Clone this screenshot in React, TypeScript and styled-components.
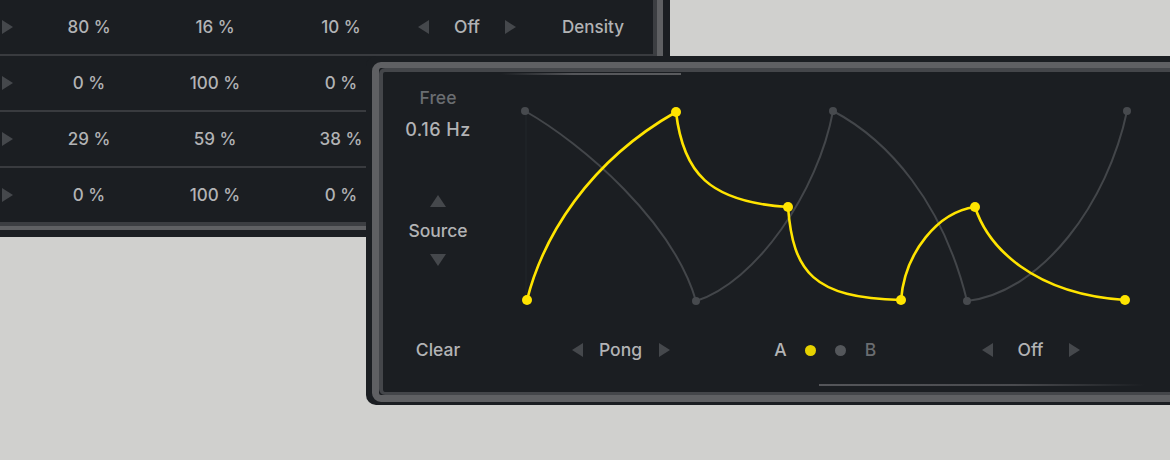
import styled, { createGlobalStyle } from "styled-components";

const GlobalStyle = createGlobalStyle`
  html, body { margin: 0; padding: 0; background: #d0d0ce; }
  body { font-family: Inter, "Noto Sans", sans-serif; }
`;

const Page = styled.div`
  width: 1170px;
  height: 460px;
  overflow: hidden;
  display: grid;
  grid-template-columns: 366px 304px 1fr;
  grid-template-rows: 56px 181px 1fr;
  background: #d0d0ce;
`;

// ---- top table panel (its left side is off screen) ----

const TopPanel = styled.div`
  grid-column: 1 / 3;
  grid-row: 1 / 3;
  background: #1b1e22;
  padding: 0 7px 7px 0;
  border-bottom-right-radius: 10px;
  box-sizing: border-box;
`;

const TopRing = styled.div`
  height: 100%;
  box-sizing: border-box;
  border-right: 6px solid #5f6063;
  border-bottom: 4px solid #5f6063;
  border-bottom-right-radius: 8px;
`;

const TopInner = styled.div`
  height: 100%;
  box-sizing: border-box;
  border-right: 4px solid #3c3e42;
  border-bottom: 4px solid #3c3e42;
  border-bottom-right-radius: 5px;
  overflow: hidden;
`;

const Row = styled.div`
  display: grid;
  grid-template-columns: 26px repeat(5, 126px);
  align-items: center;
  height: 54px;
  border-bottom: 2px solid #393b3f;
  &:last-child { border-bottom: none; }
`;

const Cell = styled.div`
  display: flex;
  justify-content: center;
  align-items: center;
  font-size: 17px;
  font-weight: 500;
  line-height: 20px;
  color: #b2b3b5;
  white-space: nowrap;
`;

const ExpandCell = styled.div`
  display: flex;
  align-items: center;
  padding-left: 2px;
`;

const Tri = styled.span<{ $dir: "up" | "down" | "left" | "right" }>`
  display: block;
  width: 0;
  height: 0;
  ${p =>
    p.$dir === "up"
      ? "border-left: 8px solid transparent; border-right: 8px solid transparent; border-bottom: 12px solid #45484c;"
      : p.$dir === "down"
      ? "border-left: 8px solid transparent; border-right: 8px solid transparent; border-top: 12px solid #45484c;"
      : p.$dir === "left"
      ? "border-top: 7px solid transparent; border-bottom: 7px solid transparent; border-right: 11px solid #45484c;"
      : "border-top: 7px solid transparent; border-bottom: 7px solid transparent; border-left: 11px solid #45484c;"}
`;

const Selector = styled.div`
  display: flex;
  align-items: center;
  gap: 5px;
`;

const SelLabel = styled.span`
  width: 66px;
  text-align: center;
  font-size: 17.5px;
  font-weight: 500;
  line-height: 20px;
  color: #b2b3b5;
`;

// ---- modulation panel ----

const ModPanel = styled.div`
  grid-column: 2 / 4;
  grid-row: 2 / 4;
  align-self: start;
  width: 824px;
  height: 349px;
  box-sizing: border-box;
  background: #1b1e22;
  border-radius: 10px;
  padding: 6px 0 3px 6px;
  z-index: 1;
`;

const ModRing = styled.div`
  height: 100%;
  box-sizing: border-box;
  border: 7px solid #5f6063;
  border-top-width: 6px;
  border-radius: 9px;
`;

const ModInner = styled.div`
  position: relative;
  height: 100%;
  box-sizing: border-box;
  border: 4px solid #44464a;
  border-bottom-width: 3px;
  border-radius: 6px;
  background: #1b1e22;
  display: grid;
  grid-template-columns: 110px 1fr;
  grid-template-rows: 250px 56px;
  padding-bottom: 14px;

  &::before {
    content: "";
    position: absolute;
    left: 118px;
    top: 1px;
    width: 180px;
    height: 2px;
    background: linear-gradient(90deg, rgba(90, 91, 94, 0), #55565a 40%, #5a5b5e);
  }
  &::after {
    content: "";
    position: absolute;
    left: 436px;
    top: 312px;
    width: 326px;
    height: 2px;
    background: linear-gradient(90deg, #55565a, #4a4b4f 60%, rgba(74, 75, 79, 0));
  }
`;

const LeftCol = styled.div`
  display: flex;
  flex-direction: column;
  align-items: center;
  padding-top: 16px;
`;

const Text = styled.div<{ $dim?: boolean; $mt?: number }>`
  font-size: 17.5px;
  font-weight: 500;
  line-height: 20px;
  color: ${p => (p.$dim ? "#6a6d71" : "#b2b3b5")};
  margin-top: ${p => p.$mt ?? 0}px;
  white-space: nowrap;
`;

const Rate = styled(Text)`
  font-size: 18px;
  letter-spacing: 0.5px;
`;

const Spacer = styled.div<{ $h: number }>`
  height: ${p => p.$h}px;
`;

const Chart = styled.svg`
  display: block;
  overflow: visible;
`;

const ClearCell = styled.div`
  display: flex;
  align-items: center;
  justify-content: center;
`;

const BottomControls = styled.div`
  display: grid;
  grid-template-columns: repeat(3, 205px);
  padding-left: 25px;
  align-items: center;
  justify-items: center;
`;

const ABGroup = styled.div`
  display: grid;
  grid-template-columns: repeat(4, 30px);
  justify-items: center;
  align-items: center;
`;

const Dot = styled.span<{ $on?: boolean }>`
  width: 11px;
  height: 11px;
  border-radius: 50%;
  background: ${p => (p.$on ? "#e6d200" : "#54575b")};
`;

const rows = [
  ["80 %", "16 %", "10 %"],
  ["0 %", "100 %", "0 %"],
  ["29 %", "59 %", "38 %"],
  ["0 %", "100 %", "0 %"],
];

const greyPts = [
  [32, 39],
  [203, 229],
  [340, 39],
  [474, 229],
  [634, 39],
];

const yellowPts = [
  [34, 228],
  [183, 40],
  [295, 135],
  [408, 228],
  [482, 135],
  [632, 228],
];

function Sel({ label }: { label: string }) {
  return (
    <Selector>
      <Tri $dir="left" />
      <SelLabel>{label}</SelLabel>
      <Tri $dir="right" />
    </Selector>
  );
}

export default function App() {
  return (
    <Page>
      <GlobalStyle />
      <TopPanel>
        <TopRing>
          <TopInner>
            {rows.map((r, i) => (
              <Row key={i}>
                <ExpandCell>
                  <Tri $dir="right" />
                </ExpandCell>
                {r.map((v, j) => (
                  <Cell key={j}>{v}</Cell>
                ))}
                {/* the rest of the lower rows sits under the LFO panel */}
                {i === 0 && (
                  <>
                    <Cell>
                      <Sel label="Off" />
                    </Cell>
                    <Cell>Density</Cell>
                  </>
                )}
              </Row>
            ))}
          </TopInner>
        </TopRing>
      </TopPanel>

      <ModPanel>
        <ModRing>
          <ModInner>
            <LeftCol>
              <Text $dim>Free</Text>
              <Rate $mt={12}>0.16 Hz</Rate>
              <Spacer $h={55} />
              <Tri $dir="up" />
              <Text $mt={14}>Source</Text>
              <Spacer $h={13} />
              <Tri $dir="down" />
            </LeftCol>

            <Chart width="677" height="250" viewBox="0 0 677 250">
              <line x1="33" y1="39" x2="33" y2="228" stroke="#23262b" strokeWidth="1" />
              <path
                d="M32 39 C90 72 180 150 203 229 C263 210 325 120 340 39 C395 68 450 130 474 229 C550 220 615 130 634 39"
                fill="none"
                stroke="#43464a"
                strokeWidth="2"
              />
              {greyPts.map(([x, y], i) => (
                <circle key={i} cx={x} cy={y} r="4" fill="#474a4e" />
              ))}
              <path
                d="M34 228 C50 165 95 90 183 40 C190 100 215 130 295 135 C300 200 320 226 408 228 C412 180 445 140 482 135 C495 175 540 222 632 228"
                fill="none"
                stroke="#ffe400"
                strokeWidth="2.6"
              />
              {yellowPts.map(([x, y], i) => (
                <circle key={i} cx={x} cy={y} r="5" fill="#ffe400" />
              ))}
            </Chart>

            <ClearCell>
              <Text>Clear</Text>
            </ClearCell>

            <BottomControls>
              <Sel label="Pong" />
              <ABGroup>
                <Text>A</Text>
                <Dot $on />
                <Dot />
                <Text $dim>B</Text>
              </ABGroup>
              <Sel label="Off" />
            </BottomControls>
          </ModInner>
        </ModRing>
      </ModPanel>
    </Page>
  );
}
